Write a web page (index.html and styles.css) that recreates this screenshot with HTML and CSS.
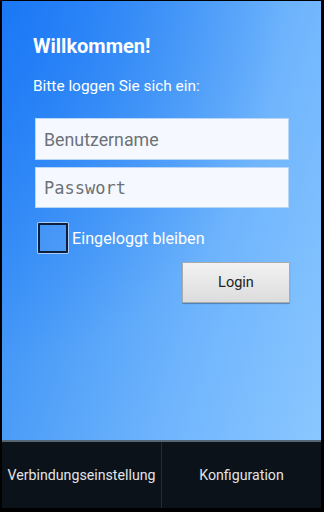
FILE: index.html
```html
<!DOCTYPE html>
<html lang="de">
<head>
<meta charset="utf-8">
<link rel="stylesheet" href="styles.css">
</head>
<body>
<div class="screen">
  <main class="main">
    <h1 class="title">Willkommen!</h1>
    <p class="subtitle">Bitte loggen Sie sich ein:</p>
    <div class="fields">
      <input class="field" type="text" placeholder="Benutzername">
      <input class="field mono" type="text" placeholder="Passwort">
    </div>
    <label class="remember"><span class="box"></span><span class="remember-text">Eingeloggt bleiben</span></label>
    <div class="actions"><button class="login">Login</button></div>
  </main>
  <nav class="bar">
    <div class="bar-item">Verbindungseinstellung</div>
    <div class="bar-item">Konfiguration</div>
  </nav>
</div>
</body>
</html>
```
FILE: styles.css
```css
html, body { margin: 0; padding: 0; }
body { background: #000; width: 324px; height: 512px; overflow: hidden; font-family: Roboto, "Noto Sans", sans-serif; }
.screen { height: 512px; box-sizing: border-box; padding: 1px 3px 4px 2px; display: flex; flex-direction: column; }
.main {
  flex: 1;
  background:
    radial-gradient(ellipse 280px 360px at 0% 0%, rgba(16,110,245,0.6) 0%, rgba(16,110,245,0) 100%),
    linear-gradient(108deg, #2a86f7 0%, #4f9ff8 35%, #70b5fd 66%, #8ac7ff 100%);
  padding: 0 0 0 31px;
  box-sizing: border-box;
}
.title { margin: 32px 0 0; color: #fff; font-size: 20px; font-weight: 700; line-height: 26px; }
.subtitle { margin: 17px 0 0; color: #fff; font-size: 15.4px; line-height: 20px; }
.fields { margin: 22px 0 0 2px; display: flex; flex-direction: column; gap: 7px; width: 254px; }
.field {
  height: 42px; box-sizing: border-box; margin: 0; border: 1px solid #b9d6f6; background: #f5f9ff;
  padding: 0 8px; font-family: Roboto, sans-serif; font-size: 17.8px; color: #333; outline: none;
}
.field.mono { height: 41px; }
.field::placeholder { color: #6d7177; }
.field.mono { font-family: "DejaVu Sans Mono", monospace; font-size: 17px; }
.field.mono::placeholder { color: #6d7177; }
.remember { display: flex; align-items: center; gap: 4px; margin: 15px 0 0 5px; }
.box { width: 26px; height: 26px; border: 2px solid #0e1f3e; box-shadow: 0 0 0 1px #a9cdf4; background: rgba(255,255,255,0.06); border-radius: 1px; }
.remember-text { color: #fff; font-size: 16.2px; }
.actions { display: flex; justify-content: flex-end; width: 257px; margin-top: 9px; }
.login {
  width: 108px; height: 41px; border: 1px solid #a9aaad; border-radius: 1px;
  background: linear-gradient(#f2f2f2, #dcdcdc); color: #222; font-family: Roboto, sans-serif; font-size: 14.5px;
  box-shadow: 0 1px 1px rgba(0,0,0,0.3);
}
.bar { height: 68px; display: flex; background: #0c1219; border-top: 2px solid #566675; box-sizing: border-box; }
.bar-item { flex: 1; display: flex; align-items: center; justify-content: center; color: #e2e4e6; font-size: 14.2px; }
.bar-item + .bar-item { border-left: 1px solid #222a33; }
```
